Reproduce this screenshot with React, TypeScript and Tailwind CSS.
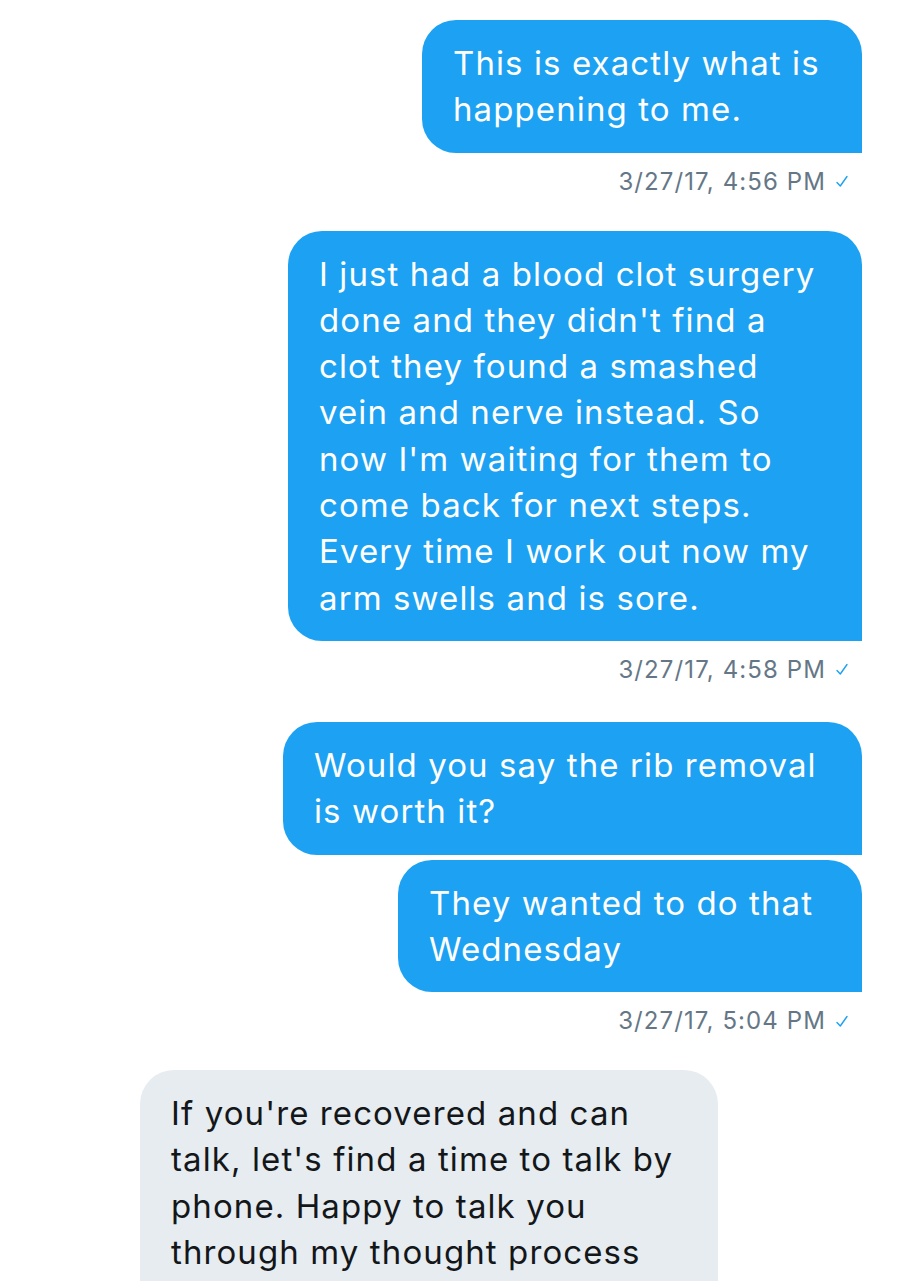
type Msg = { lines: string[]; width: string; mine: boolean };

const Tick = () => (
  <svg viewBox="0 0 12 13" className="h-[13px] w-[12px]" fill="none">
    <path
      d="M1 7.5 L4.3 11 L11 1.5"
      stroke="#1da1f2"
      strokeWidth="1.4"
      strokeLinecap="round"
      strokeLinejoin="round"
    />
  </svg>
);

const Bubble = ({ lines, width, mine }: Msg) => (
  <div
    className={
      mine
        ? `${width} bg-[#1da1f2] text-white rounded-[34px] rounded-br-none pl-[31px] py-[20px]`
        : `${width} bg-[#e6ecf0] text-[#14171a] rounded-[34px] rounded-bl-none pl-[31px] py-[20px]`
    }
  >
    {lines.map((l, i) => (
      <div key={i} className="whitespace-nowrap">
        {l || "\u00a0"}
      </div>
    ))}
  </div>
);

const Stamp = ({ time }: { time: string }) => (
  <div className="mt-[14px] flex items-center gap-[10px] pr-[14px] text-[24px] leading-[30px] tracking-[1.1px] text-[#657786]">
    <span>{time}</span>
    <Tick />
  </div>
);

export default function App() {
  return (
    <div
      className="min-h-[1281px] overflow-hidden bg-white pt-[20px] pr-[38px] text-[33px] leading-[46.3px] tracking-[1.1px]"
      style={{ fontFamily: "Inter, 'Noto Sans', sans-serif" }}
    >
      <div className="flex flex-col items-end">
        <Bubble
          mine
          width="w-[440px]"
          lines={["This is exactly what is", "happening to me."]}
        />
        <Stamp time="3/27/17, 4:56 PM" />

        <div className="mt-[34px]" />
        <Bubble
          mine
          width="w-[574px]"
          lines={[
            "I just had a blood clot surgery",
            "done and they didn't find a",
            "clot they found a smashed",
            "vein and nerve instead. So",
            "now I'm waiting for them to",
            "come back for next steps.",
            "Every time I work out now my",
            "arm swells and is sore.",
          ]}
        />
        <Stamp time="3/27/17, 4:58 PM" />

        <div className="mt-[37px]" />
        <Bubble
          mine
          width="w-[579px]"
          lines={["Would you say the rib removal", "is worth it?"]}
        />
        <div className="mt-[5px]" />
        <Bubble
          mine
          width="w-[464px]"
          lines={["They wanted to do that", "Wednesday"]}
        />
        <Stamp time="3/27/17, 5:04 PM" />
      </div>

      <div className="mt-[34px] pl-[140px]">
        <Bubble
          mine={false}
          width="w-[578px]"
          lines={[
            "If you're recovered and can",
            "talk, let's find a time to talk by",
            "phone. Happy to talk you",
            "through my thought process",
            "",
          ]}
        />
      </div>
    </div>
  );
}
